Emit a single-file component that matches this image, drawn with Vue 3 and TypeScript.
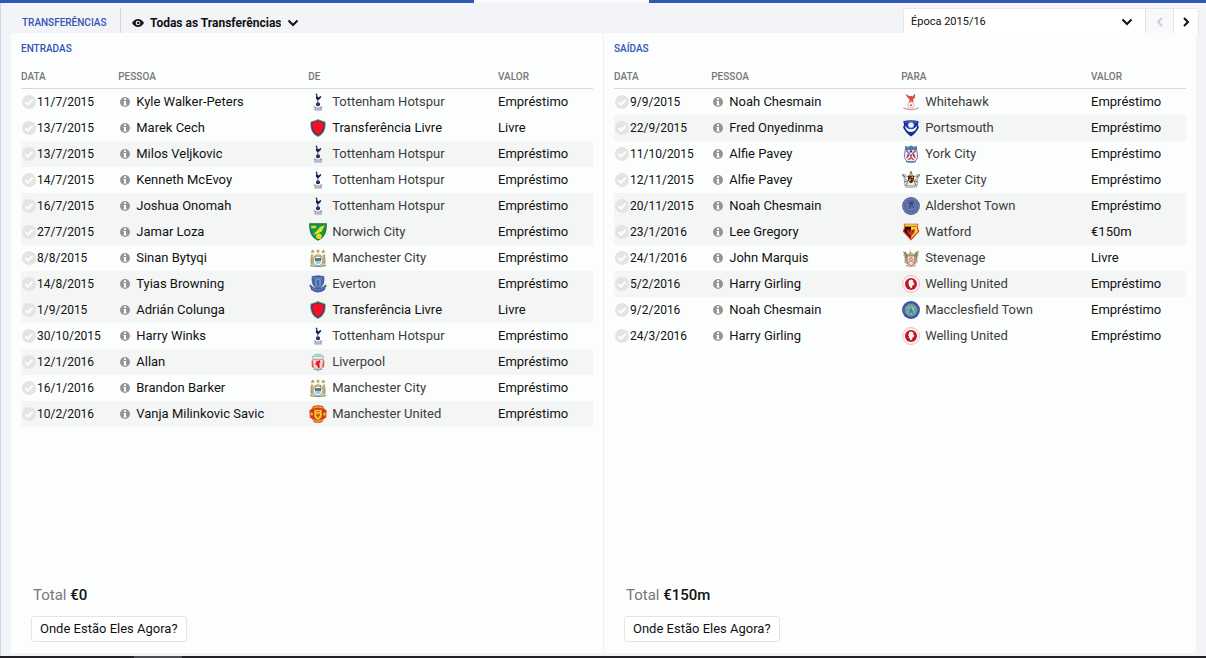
<script setup lang="ts">
import { ref } from 'vue'

interface Transfer {
  date: string
  person: string
  club: string
  crest: string
  value: string
  shaded?: boolean
  free?: boolean
}

interface Side {
  id: string
  title: string
  clubHeading: string
  total: string
  rows: Transfer[]
}

const LOAN = 'Empréstimo'
const FREE = 'Livre'

const sides: Side[] = [
  {
    id: 'in',
    title: 'ENTRADAS',
    clubHeading: 'DE',
    total: '€0',
    rows: [
      { date: '11/7/2015', person: 'Kyle Walker-Peters', club: 'Tottenham Hotspur', crest: 'tottenham', value: LOAN },
      { date: '13/7/2015', person: 'Marek Cech', club: 'Transferência Livre', crest: 'free', value: FREE, free: true },
      { date: '13/7/2015', person: 'Milos Veljkovic', club: 'Tottenham Hotspur', crest: 'tottenham', value: LOAN, shaded: true },
      { date: '14/7/2015', person: 'Kenneth McEvoy', club: 'Tottenham Hotspur', crest: 'tottenham', value: LOAN },
      { date: '16/7/2015', person: 'Joshua Onomah', club: 'Tottenham Hotspur', crest: 'tottenham', value: LOAN, shaded: true },
      { date: '27/7/2015', person: 'Jamar Loza', club: 'Norwich City', crest: 'norwich', value: LOAN, shaded: true },
      { date: '8/8/2015', person: 'Sinan Bytyqi', club: 'Manchester City', crest: 'mancity', value: LOAN },
      { date: '14/8/2015', person: 'Tyias Browning', club: 'Everton', crest: 'everton', value: LOAN, shaded: true },
      { date: '1/9/2015', person: 'Adrián Colunga', club: 'Transferência Livre', crest: 'free', value: FREE, shaded: true, free: true },
      { date: '30/10/2015', person: 'Harry Winks', club: 'Tottenham Hotspur', crest: 'tottenham', value: LOAN },
      { date: '12/1/2016', person: 'Allan', club: 'Liverpool', crest: 'liverpool', value: LOAN, shaded: true },
      { date: '16/1/2016', person: 'Brandon Barker', club: 'Manchester City', crest: 'mancity', value: LOAN },
      { date: '10/2/2016', person: 'Vanja Milinkovic Savic', club: 'Manchester United', crest: 'manutd', value: LOAN, shaded: true },
    ],
  },
  {
    id: 'out',
    title: 'SAÍDAS',
    clubHeading: 'PARA',
    total: '€150m',
    rows: [
      { date: '9/9/2015', person: 'Noah Chesmain', club: 'Whitehawk', crest: 'whitehawk', value: LOAN },
      { date: '22/9/2015', person: 'Fred Onyedinma', club: 'Portsmouth', crest: 'portsmouth', value: LOAN, shaded: true },
      { date: '11/10/2015', person: 'Alfie Pavey', club: 'York City', crest: 'york', value: LOAN },
      { date: '12/11/2015', person: 'Alfie Pavey', club: 'Exeter City', crest: 'exeter', value: LOAN },
      { date: '20/11/2015', person: 'Noah Chesmain', club: 'Aldershot Town', crest: 'aldershot', value: LOAN, shaded: true },
      { date: '23/1/2016', person: 'Lee Gregory', club: 'Watford', crest: 'watford', value: '€150m', shaded: true },
      { date: '24/1/2016', person: 'John Marquis', club: 'Stevenage', crest: 'stevenage', value: FREE },
      { date: '5/2/2016', person: 'Harry Girling', club: 'Welling United', crest: 'welling', value: LOAN, shaded: true },
      { date: '9/2/2016', person: 'Noah Chesmain', club: 'Macclesfield Town', crest: 'macclesfield', value: LOAN },
      { date: '24/3/2016', person: 'Harry Girling', club: 'Welling United', crest: 'welling', value: LOAN },
    ],
  },
]

const filter = ref('Todas as Transferências')
const season = ref('Época 2015/16')
</script>

<template>
  <div class="page">
    <svg class="defs" aria-hidden="true">
      <symbol id="crest-tottenham" viewBox="0 0 18 18">
        <path d="M6.600 1 8 .6l.3 1.200.2 1.700.9.900 1.400-.9 1.400-.5-.2 1.500-1.300 1.500-1.300 1.100-.3 2.200h-.5l-.2-2.200L7.200 6.100l-.4-1.800.7-1.400z" fill="#151c4d" />
        <circle cx="9" cy="11.300" r="2" fill="#151c4d" />
        <path d="M8 10.800l1 .6 1-.8" stroke="#8c91b5" stroke-width=".5" fill="none" />
        <path d="M4.400 13.600h2l1 .8h3.200l1-.8h2l-1 1.400.2 2.400H5.400l.2-2.400z" fill="#9297aa" />
        <path d="M6 15.600h6M6.400 16.800h5.200" stroke="#d7dae3" stroke-width=".6" />
      </symbol>
      <symbol id="crest-free" viewBox="0 0 18 18">
        <path d="M9 0c2 1.200 4.200 1.700 6.300 2.200 1 .3 1.400.9 1.400 2 .2 6.300-2.200 11.500-7.700 13.700C3.500 15.700 1.100 10.500 1.300 4.200c0-1.100.4-1.700 1.400-2C4.800 1.700 7 1.200 9 0z" fill="#58b53e" />
        <path d="M9 .9c1.900 1.100 3.900 1.600 5.800 2 .8.200 1.100.6 1.100 1.500.1 5.800-2 10.400-6.900 12.500C4.100 14.800 2 10.200 2.100 4.400c0-.9.3-1.300 1.100-1.500C5.100 2.500 7.100 2 9 .9z" fill="#5324a8" />
        <path d="M9 2c1.500.9 3.200 1.300 4.700 1.600.7.200 1 .5 1 1.200 0 4.900-1.700 8.900-5.700 10.900-4-2-5.700-6-5.700-10.900 0-.7.300-1 1-1.200C5.800 3.300 7.500 2.900 9 2z" fill="#f3121d" />
      </symbol>
      <symbol id="crest-norwich" viewBox="0 0 18 18">
        <path d="M.2.300h17.600c.2 8-1.500 14-8.800 17.500C1.700 14.300 0 8.300.2.300z" fill="#1a6a32" />
        <path d="M1.200 1.200h15.600c.1 7.200-1.600 12.400-7.800 15.500C2.800 13.600 1.100 8.400 1.200 1.200z" fill="#159848" />
        <path d="M2.200 3.500l.8-.9.900.7.900-.7.900.7.900-.7.500.9v1.700H2.400z" fill="#f0dc2d" />
        <path d="M15.800 2.200 14 5.400l-1.500 3.200-3.600 1.600-4.700 1.500 3.300-3.500 3.700-4.300z" fill="#f5e82d" />
        <circle cx="9.900" cy="13.200" r="2.700" fill="#f8e717" />
        <path d="M7.900 12.600l2 .8 2-.6M9.900 13.400v2M9 9l4-4.500" stroke="#aea21d" stroke-width=".5" fill="none" />
      </symbol>
      <symbol id="crest-mancity" viewBox="0 0 18 18">
        <path d="M3.600.2l.7 1.500 1.500.2-1.100 1 .3 1.500-1.400-.8-1.300.8.3-1.500-1.100-1 1.500-.2zM9 0l.6 1.400 1.500.1-1.100 1 .3 1.500L9 3.300l-1.300.7.3-1.500-1.100-1 1.500-.1zM14.400.2l.6 1.500 1.500.2-1.100 1 .3 1.500-1.300-.8-1.400.8.3-1.500-1.100-1 1.500-.2z" fill="#b79c5c" />
        <path d="M2 5.500 3.600 5l2 2 2-2.200h3l2 2.200 2-2 1.500.5 1 7.500-1.200 3.500H2.100L.9 13z" fill="#dccb99" />
        <path d="M2.800 6v9M15.200 6v9M6.600 6l-.5 3M11.400 6l.5 3" stroke="#8f804f" stroke-width=".8" />
        <circle cx="9" cy="12" r="4.900" fill="#f9fafb" stroke="#55606a" stroke-width=".6" />
        <path d="M5.900 9h6.200v3.500c-.3 1.500-1.500 2.500-3.100 3.100-1.600-.6-2.800-1.600-3.100-3.100z" fill="#8bd2ea" />
        <path d="M6.200 9.300h5.600v2.200H6.200z" fill="#28343c" />
        <path d="M7 10h4" stroke="#dfb84a" stroke-width=".8" />
        <path d="M1.300 15.800q7.700 2.400 15.400 0v1.500q-7.700 1.400-15.400 0z" fill="#8e8869" />
      </symbol>
      <symbol id="crest-everton" viewBox="0 0 18 18">
        <path d="M3.200 1.600Q9 .1 14.800 1.600c.4 5.500-.2 9.700-5.800 12.800C3.400 11.300 2.800 7.100 3.200 1.600z" fill="#4865a9" stroke="#314d92" stroke-width=".8" />
        <path d="M4.300 3h9.400M6.600 4.500h4.800v6.800H6.600z" fill="#6482bd" stroke="#93a8d4" stroke-width=".6" />
        <path d="M9 5v6" stroke="#314d92" />
        <path d="M1.300 9.200Q9 18 16.700 9.200l1 2.300-1.400 1-.2 2.300Q9 20 1.900 14.800l-.2-2.300-1.400-1z" fill="#40599d" />
        <path d="M3.200 13q5.800 4.200 11.600 0" fill="none" stroke="#8298c6" stroke-width=".8" />
      </symbol>
      <symbol id="crest-liverpool" viewBox="0 0 18 18">
        <path d="M2.500 4.500Q5 .5 9 .5t6.500 4l-1.600.7L13 4H5l-.9 1.200z" fill="#83cdbb" />
        <path d="M4.600 3.200 9 1.700l4.400 1.500" stroke="#dff1ec" stroke-width=".7" fill="none" />
        <path d="M3.700 6.200h10.600v6c-1 2.700-2.600 4.200-5.300 5.300-2.700-1.100-4.300-2.600-5.300-5.300z" fill="#f8d3d3" stroke="#d86067" stroke-width=".8" />
        <path d="M7 7.500l1.500.8 2-1.200 1 1.800-1.100 1.500.4 3.800-1.300 1.200-1.600-3L6 10.800 7.500 9.600z" fill="#d51f31" />
        <path d="M4.500 15.700h9v1.400H9l-.3.800-.4-.8H4.500z" fill="#79b9a9" />
        <path d="M2.300 8q1 2.500.3 4.500l1 2.500 1.200-1.300-.6-4-.8-2.500zM15.700 8q-1 2.500-.3 4.500l-1 2.500-1.200-1.300.6-4 .8-2.500z" fill="#df5960" />
      </symbol>
      <symbol id="crest-manutd" viewBox="0 0 18 18">
        <path d="M4 1.300Q9-.7 14 1.300l1.300 2.500 2.300 1.700-.4 7-2.400 1.500L13.200 17Q9 18.700 4.800 17l-1.600-3-2.400-1.500-.4-7 2.300-1.700z" fill="#d93a22" />
        <path d="M4.200 3.200Q9 .6 13.800 3.200M4.100 14.800Q9 17.700 13.900 14.800" fill="none" stroke="#f5b52e" stroke-width="1.300" />
        <circle cx="2.600" cy="9" r="1.500" fill="#f2b230" />
        <circle cx="15.400" cy="9" r="1.500" fill="#f2b230" />
        <path d="M5 4.500h8v7c-.8 2-2 3-4 3.800-2-.8-3.200-1.800-4-3.800z" fill="#f8ce23" stroke="#9f281e" stroke-width=".5" />
        <path d="M7 6.600h4" stroke="#a5741f" stroke-width=".8" />
        <path d="M9 8.500v4.500M7.800 8.700v2.200h2.400V8.700" fill="none" stroke="#d92a1d" stroke-width="1" />
      </symbol>
      <symbol id="crest-whitehawk" viewBox="0 0 18 18">
        <path d="M3.700.7l3.800 2.600L9 2.800l1.500.7 2.500-3 .2 3.800-2.200 2.500.9 2.600-2.600-1.200-2.800 1.400 1.200-3.200-2.500-2.200z" fill="#d94d4d" />
        <circle cx="8.900" cy="12.200" r="3" fill="#fff" stroke="#de8a8c" stroke-width=".7" />
        <path d="M8.200 11.300h1.500l.4 1.300-1.200.9-1.200-.9z" fill="#d65557" />
        <path d="M.6 14.200l2.800.4q5.500 2.800 11 0l2.800-.4-1.600 2.400q-6.500 2-13.400 0z" fill="#f0dcdc" />
        <path d="M1.200 14.800q7.800 3.600 15.600 0" fill="none" stroke="#b88486" stroke-width=".7" />
      </symbol>
      <symbol id="crest-portsmouth" viewBox="0 0 18 18">
        <path d="M1.200 2.300Q9 .3 16.800 2.300l-.9 3.300 1 3Q14 14.500 9 17.500 4 14.500 1.100 8.600l1-3z" fill="#162e9b" />
        <path d="M2.800 6.200Q3.500 12.800 9 12.900q5.500-.1 6.200-6.700Q12.800 10.200 9 10.200T2.800 6.200z" fill="#f9fbff" />
        <path d="M9 2.300l.8 1.700 1.800-.5-.4 1.800 1.700.8-1.700.8.4 1.800-1.800-.5L9 9.900l-.8-1.700-1.800.5.4-1.800-1.700-.8 1.700-.8-.4-1.800 1.800.5z" fill="#edf2ff" />
        <path d="M2.800 3.400Q9 2 15.200 3.400" fill="none" stroke="#7e91ce" stroke-width=".7" />
      </symbol>
      <symbol id="crest-york" viewBox="0 0 18 18">
        <path d="M3 1l3 .8L9 .5l3 1.300L15 1v4H3z" fill="#557bb4" />
        <path d="M3.300 4.500h11.400l1 8-2.700 4.100H5l-2.700-4.100z" fill="#eef1f8" stroke="#476eaa" stroke-width=".9" />
        <path d="M4.200 5.200 7.300 8.600l-2.600 4.500M13.800 5.200 10.700 8.600l2.600 4.500M6.300 14.800 9 12.600l2.700 2.200" fill="none" stroke="#df3f55" stroke-width="1.500" />
        <path d="M7.800 5.300h2.400v2.200H7.800zM5.300 9.500h1.500v1.700H5.300zM11.200 9.500h1.500v1.700h-1.500zM8.200 9.500h1.600v2.300H8.200z" fill="#284881" />
        <path d="M4 15.700q5 2.600 10 0v1.200q-5 1.800-10 0z" fill="#557bb4" />
      </symbol>
      <symbol id="crest-exeter" viewBox="0 0 18 18">
        <path d="M.3 3.400 3.500 4l1.300 1.500h8.400L14.500 4l3.200-.6-.8 2.300-1.300.6.300 2.500-.9.800.6 3-.9 2.700H3.300l-.9-2.700.6-3-.9-.8.300-2.500-1.300-.6z" fill="#eeeeea" stroke="#777" stroke-width=".7" />
        <path d="M.5 4 4 6.500M17.500 4 14 6.500M3.500 8l2 2-1 4M14.500 8l-2 2 1 4M2.500 10.500h2M13.500 10.500h2" fill="none" stroke="#444" stroke-width=".8" />
        <path d="M8 2V.3h2V2l1 1.500H7z" fill="#9d803b" />
        <path d="M6 4.500h6V9l-1.200 2L9 12.200 7.200 11 6 9z" fill="#29251e" />
        <path d="M7.500 5.400h1.600v2H7.500zM9.800 7.500h1.500v2H9.800z" fill="#df3428" />
        <path d="M9.600 5.400h1.500v1.500H9.600zM7.200 8h1.600v2H7.200z" fill="#e7c736" />
        <path d="M3.500 14q5.500 1.700 11 0v1.900q-5.500 1.200-11 0z" fill="#d5d5d0" stroke="#777" stroke-width=".5" />
      </symbol>
      <symbol id="crest-aldershot" viewBox="0 0 18 18">
        <circle cx="9" cy="9" r="8.900" fill="#4c5d96" />
        <circle cx="9" cy="9" r="7.200" fill="none" stroke="#8c99c4" stroke-width="1.200" stroke-dasharray="1 .7" />
        <circle cx="9" cy="9" r="5.600" fill="#6375ac" />
        <path d="M5.500 13 7 7.300l-1-1.700 2.300-1.100L10 3.600l2.400 2.200-1 1.300 1.400 5.700-2-1.800-1.600-.4-1.500 1.200zM8 8.400h2l.6 1.800H7.700z" fill="#35467f" stroke="#8f9dc8" stroke-width=".4" />
      </symbol>
      <symbol id="crest-watford" viewBox="0 0 18 18">
        <path d="M1.500.8h15l-.9 3 1.700 4.800L9 17.500.7 8.600l1.700-4.800z" fill="#e23b28" />
        <path d="M2.500 1.300h13l-.5 2H3z" fill="#e6d13e" />
        <path d="M3.300 4H9v11.500L2.200 8.400z" fill="#171512" />
        <path d="M9 4h5.700l1.100 4.400L9 15.500z" fill="#f5dc27" />
        <path d="M5.600 5.800 8 7.600l1-1.200 1 1.200 2.500-1.900.2 3.200-1.200 2.200-1.400.8L9 14.300l-1.100-2.400-1.600-.9L5 8.900z" fill="#df2c20" />
        <path d="M6.300 6.300l1.300 2.500M11.900 6.400 10.500 9" stroke="#111" stroke-width=".7" />
      </symbol>
      <symbol id="crest-stevenage" viewBox="0 0 18 18">
        <path d="M1 2.500l3 .5 1.300 2.500L7.500 4 8.300.8 9.500 4l2 1.400L13.600 3l3.300-1.200-1.200 2.600 1.100 1.600-1.700 2 .5 3-2 4-4.600 2-4.600-2-2-4 .4-3L1.100 6l1.200-1.500z" fill="#aaa38d" />
        <path d="M1.500 3 5 6 3.300 9M16.500 2.800 13.500 6l1.600 3" fill="none" stroke="#5f6957" />
        <path d="M5.300 7h7.400v5.500l-1.500 2.800L9 16.500l-2.200-1.200-1.500-2.800z" fill="#eee2d3" stroke="#9c5a50" stroke-width=".6" />
        <path d="M6.500 11.500 9 8.500l2.500 3M7 13.700 9 11.300l2 2.400" fill="none" stroke="#c94945" stroke-width="1" />
        <path d="M7 3.500 9 5l2-1.500v2.500H7zM2.500 12h2v2h-2zM13.300 12h2v2h-2z" fill="#ccb23e" />
        <path d="M4 15.800q5 2 10 0v1.500q-5 1.200-10 0z" fill="#da9693" />
      </symbol>
      <symbol id="crest-welling" viewBox="0 0 18 18">
        <circle cx="9" cy="9" r="8.500" fill="#fffafa" stroke="#e5a5aa" stroke-width=".7" />
        <circle cx="9" cy="9" r="7.200" fill="none" stroke="#f2c9cc" stroke-width=".8" stroke-dasharray=".8 .6" />
        <circle cx="9" cy="9" r="6" fill="#bd1729" />
        <path d="M7.300 5 9.500 4.400l1.800 1.300-.2 1.500 1.300 1.200-.9 1.800-1.100.4-.3 2-1.500.8-.5-2-1.400-.5.400-1.500L6.300 8.300z" fill="#fff8f6" />
      </symbol>
      <symbol id="crest-macclesfield" viewBox="0 0 18 18">
        <circle cx="9" cy="9" r="8.900" fill="#2c449a" />
        <circle cx="9" cy="9" r="7.400" fill="none" stroke="#8c9aca" stroke-width=".8" stroke-dasharray=".9 .8" />
        <circle cx="9" cy="9" r="6.100" fill="#4ba0cc" stroke="#b7ad5e" stroke-width=".6" />
        <path d="M5 6.500 7 5l1 2 1.500-2.500 2 1.500 1.700 1-1.200 2 1 2.500-2.500.5L9 14.200l-1.500-2-2.600.5 1-3z" fill="#b9b46a" />
        <path d="M6 8l2 1v2.500M9.300 6.500v3l2 .8M7 12l2-2 2 2.500" fill="none" stroke="#2488ba" stroke-width="1.300" />
      </symbol>
      <symbol id="icon-tick" viewBox="0 0 14 14">
        <circle cx="7" cy="7" r="7" fill="#e3e5e5" />
        <path d="M3.500 7.200l2.400 2.400L10.700 4.800" fill="none" stroke="#fdfefd" stroke-width="2" />
      </symbol>
      <symbol id="icon-info" viewBox="0 0 10 10">
        <circle cx="5" cy="5" r="5" fill="#939494" />
        <path d="M4 1.300h2v1.600H4zM3.500 3.900H6v3.500h.6v1H3.500v-1H4V4.900h-.5z" fill="#fff" />
      </symbol>
      <symbol id="icon-down" viewBox="0 0 12 8">
        <path d="M1.500 1.500 6 6l4.500-4.500" fill="none" stroke="currentColor" stroke-width="2" />
      </symbol>
    </svg>

    <div class="tab-strip"><i></i><i class="active"></i><i></i></div>

    <main class="content">
      <header class="toolbar">
        <h1 class="heading">TRANSFERÊNCIAS</h1>
        <div class="filter">
          <svg class="eye" viewBox="0 0 12 8" aria-hidden="true">
            <path d="M0 4Q2.500 0 6 0t6 4Q9.500 8 6 8T0 4z" fill="#17181a" />
            <circle cx="6" cy="4" r="2.300" fill="#f3f4f7" />
            <circle cx="6.200" cy="4" r="1.300" fill="#17181a" />
          </svg>
          <select v-model="filter" aria-label="Filtro de transferências">
            <option>Todas as Transferências</option>
          </select>
          <svg class="chevron" aria-hidden="true"><use href="#icon-down" /></svg>
        </div>
        <div class="season">
          <select v-model="season" aria-label="Época">
            <option>Época 2015/16</option>
          </select>
          <svg class="chevron" aria-hidden="true"><use href="#icon-down" /></svg>
          <button type="button" class="step" disabled aria-label="Época anterior">
            <svg viewBox="0 0 8 10"><path d="M6 1 2 5l4 4" /></svg>
          </button>
          <button type="button" class="step" aria-label="Época seguinte">
            <svg viewBox="0 0 8 10"><path d="M2 1l4 4-4 4" /></svg>
          </button>
        </div>
      </header>

      <div class="panel">
        <section v-for="side in sides" :key="side.id" class="side" :aria-labelledby="`title-${side.id}`">
          <h2 :id="`title-${side.id}`">{{ side.title }}</h2>
          <table>
            <colgroup>
              <col class="c-date" />
              <col class="c-person" />
              <col class="c-club" />
              <col />
            </colgroup>
            <thead>
              <tr>
                <th scope="col">DATA</th>
                <th scope="col">PESSOA</th>
                <th scope="col">{{ side.clubHeading }}</th>
                <th scope="col">VALOR</th>
              </tr>
            </thead>
            <tbody>
              <tr v-for="row in side.rows" :key="row.date + row.person" :class="{ shaded: row.shaded }">
                <td>
                  <div class="cell date">
                    <svg class="tick" aria-hidden="true"><use href="#icon-tick" /></svg>{{ row.date }}
                  </div>
                </td>
                <td>
                  <div class="cell person">
                    <svg class="info" aria-hidden="true"><use href="#icon-info" /></svg>{{ row.person }}
                  </div>
                </td>
                <td>
                  <div class="cell club" :class="{ free: row.free }">
                    <svg class="crest" aria-hidden="true"><use :href="`#crest-${row.crest}`" /></svg>{{ row.club }}
                  </div>
                </td>
                <td>{{ row.value }}</td>
              </tr>
            </tbody>
          </table>
          <footer>
            <p>Total <strong>{{ side.total }}</strong></p>
            <button type="button">Onde Estão Eles Agora?</button>
          </footer>
        </section>
      </div>
    </main>

    <div class="bottom-strip"><i></i></div>
  </div>
</template>

<style>
body {
  margin: 0;
  background: #f3f4f7;
}
</style>

<style scoped>
.page {
  box-sizing: border-box;
  min-height: 100vh;
  display: flex;
  flex-direction: column;
  background: #f3f4f7;
  color: #111;
  font: 13px/16px Roboto, "Liberation Sans", sans-serif;
}

.defs {
  position: absolute;
  width: 0;
  height: 0;
}

.tab-strip {
  display: grid;
  grid-template-columns: 474fr 175fr 557fr;
  height: 3px;
}

.tab-strip i {
  background: #3457b5;
}

.tab-strip .active {
  background: #fafafb;
}

.content {
  flex: 1;
  display: flex;
  flex-direction: column;
  padding: 5px 10px 3px;
  border-left: 1px solid #cfd6e4;
}

.toolbar {
  display: flex;
  height: 25px;
}

.heading {
  box-sizing: border-box;
  width: 110px;
  margin: 0;
  padding-left: 11px;
  border-right: 1px solid #d5d7da;
  color: #3454b4;
  font-size: 10px;
  font-weight: 500;
  line-height: 30px;
}

select {
  appearance: none;
  margin: 0;
  border: 0;
  background: transparent;
  color: #111;
  font: inherit;
}

.filter {
  display: flex;
  align-items: center;
  height: 29px;
  margin-left: 11px;
}

.eye {
  width: 12px;
  height: 8px;
}

.filter select {
  field-sizing: content;
  padding: 0 18px 0 6px;
  font-size: 12px;
  font-weight: 700;
}

.chevron {
  width: 12px;
  height: 8px;
  pointer-events: none;
}

.filter .chevron {
  margin-left: -12px;
}

.season {
  box-sizing: border-box;
  display: flex;
  align-items: center;
  height: 28px;
  width: 296px;
  margin: 0 -3px 0 auto;
  border: 1px solid #e6e7ea;
  border-radius: 3px;
  background: #fff;
}

.season select {
  flex: 1;
  height: 100%;
  padding: 0 30px 0 7px;
  font-size: 11px;
}

.season .chevron {
  margin: 0 12px 0 -24px;
}

.step {
  width: 28px;
  height: 100%;
  padding: 0;
  border: 0;
  border-left: 1px solid #e1e2e5;
  background: #fff;
  color: #111;
}

.step:last-child {
  width: 25px;
}

.step:disabled {
  background: #f8f9fa;
  color: #cfd0d3;
}

.step svg {
  display: block;
  width: 8px;
  height: 10px;
  margin: 0 auto;
  fill: none;
  stroke: currentColor;
  stroke-width: 2;
}

.panel {
  position: relative;
  flex: 1;
  display: grid;
  grid-template-columns: 1fr 1fr;
  column-gap: 1px;
  background: rgba(252, 254, 253, 0.96);
}

.side {
  display: flex;
  flex-direction: column;
  padding: 0 10px 11px;
}

.side + .side {
  box-shadow: -1px 0 #f0f2f2;
}

h2 {
  height: 30px;
  margin: 0;
  color: #3454b4;
  font-size: 10px;
  font-weight: 500;
  line-height: 32px;
}

table {
  width: 100%;
  table-layout: fixed;
  border-collapse: separate;
  border-spacing: 0;
}

.c-date {
  width: 17%;
}

.c-person,
.c-club {
  width: 33.2%;
}

th {
  box-sizing: border-box;
  height: 26px;
  padding: 2px 0 0;
  border-bottom: 1px solid #d9dbdb;
  color: #777;
  font-size: 10px;
  font-weight: 500;
  text-align: left;
}

td {
  height: 26px;
  padding: 0;
  white-space: nowrap;
}

.shaded td {
  background: #f4f5f5;
}

.cell {
  display: flex;
  align-items: center;
}

.date {
  font-size: 12px;
}

.tick {
  width: 14px;
  height: 14px;
  margin: 0 1px;
}

.info {
  width: 10px;
  height: 10px;
  margin: 0 6px 0 2px;
}

.crest {
  width: 18px;
  height: 18px;
  margin: 0 5px 0 1px;
}

.club {
  color: #3c3c3c;
}

.club.free {
  color: #111;
}

footer {
  margin-top: auto;
  padding: 20px 10px 0;
}

footer p {
  margin: 0 0 11px;
  padding-left: 2px;
  color: #777;
  font-size: 15px;
  line-height: 20px;
}

footer strong {
  color: #111;
  font-weight: 500;
}

footer button {
  height: 26px;
  padding: 0 8px;
  border: 1px solid #e3e5e5;
  border-radius: 3px;
  background: #fff;
  color: #111;
  font: inherit;
}

.bottom-strip {
  height: 2px;
  padding-left: 134px;
  background: #202227;
}

.bottom-strip i {
  display: block;
  width: 48px;
  height: 100%;
  background: #4a4c50;
}
</style>
